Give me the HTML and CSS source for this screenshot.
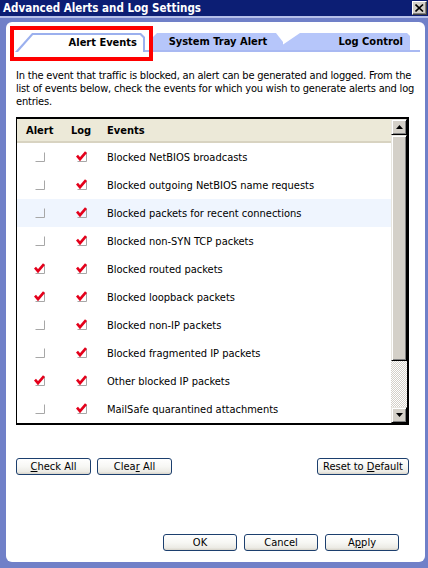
FILE: index.html
```html
<!DOCTYPE html>
<html lang="en">
<head>
<meta charset="utf-8">
<title>Advanced Alerts and Log Settings</title>
<link rel="stylesheet" href="styles.css">
</head>
<body>
<div class="window">
  <div class="titlebar">
    <span class="title">Advanced Alerts and Log Settings</span>
    <span class="close"><svg width="9" height="8" viewBox="0 0 9 8"><path d="M0.5 0.5 L8 7.5 M8 0.5 L0.5 7.5" stroke="#000" stroke-width="1.6" fill="none"/></svg></span>
  </div>
  <div class="titleline"></div>
  <div class="frame">
    <div class="panel">
      <div class="tabs">
        <div class="tab1"><div class="tab1-face"><span>Alert Events</span></div></div>
        <div class="tabrest">
          <div class="tab tab2"><span>System Tray Alert</span></div>
          <div class="tab tab3"><span>Log Control</span></div>
          <div class="tabfill"></div>
        </div>
      </div>
      <p class="desc">In the event that traffic is blocked, an alert can be generated and logged. From the list of events below, check the events for which you wish to generate alerts and log entries.</p>
      <div class="list">
        <div class="list-main">
          <div class="lrow header"><span class="h1">Alert</span><span class="h2">Log</span><span class="h3">Events</span></div>
          <div class="lrow"><span class="c1"><svg class="cb" viewBox="0 0 12 12"><path d="M10.5 1.5V10.5H1.5" stroke="#a7a7a7" fill="none"/></svg></span><span class="c2"><svg class="cb" viewBox="0 0 12 12"><path d="M10.5 1.5V10.5H1.5" stroke="#a7a7a7" fill="none"/><path d="M1 4.6 L4 8.2 L10 1.2" stroke="#e4001b" stroke-width="2.6" fill="none"/></svg></span><span class="ev">Blocked NetBIOS broadcasts</span></div>
          <div class="lrow"><span class="c1"><svg class="cb" viewBox="0 0 12 12"><path d="M10.5 1.5V10.5H1.5" stroke="#a7a7a7" fill="none"/></svg></span><span class="c2"><svg class="cb" viewBox="0 0 12 12"><path d="M10.5 1.5V10.5H1.5" stroke="#a7a7a7" fill="none"/><path d="M1 4.6 L4 8.2 L10 1.2" stroke="#e4001b" stroke-width="2.6" fill="none"/></svg></span><span class="ev">Blocked outgoing NetBIOS name requests</span></div>
          <div class="lrow hover"><span class="c1"><svg class="cb" viewBox="0 0 12 12"><path d="M10.5 1.5V10.5H1.5" stroke="#a7a7a7" fill="none"/></svg></span><span class="c2"><svg class="cb" viewBox="0 0 12 12"><path d="M10.5 1.5V10.5H1.5" stroke="#a7a7a7" fill="none"/><path d="M1 4.6 L4 8.2 L10 1.2" stroke="#e4001b" stroke-width="2.6" fill="none"/></svg></span><span class="ev">Blocked packets for recent connections</span></div>
          <div class="lrow"><span class="c1"><svg class="cb" viewBox="0 0 12 12"><path d="M10.5 1.5V10.5H1.5" stroke="#a7a7a7" fill="none"/></svg></span><span class="c2"><svg class="cb" viewBox="0 0 12 12"><path d="M10.5 1.5V10.5H1.5" stroke="#a7a7a7" fill="none"/><path d="M1 4.6 L4 8.2 L10 1.2" stroke="#e4001b" stroke-width="2.6" fill="none"/></svg></span><span class="ev">Blocked non-SYN TCP packets</span></div>
          <div class="lrow"><span class="c1"><svg class="cb" viewBox="0 0 12 12"><path d="M10.5 1.5V10.5H1.5" stroke="#a7a7a7" fill="none"/><path d="M1 4.6 L4 8.2 L10 1.2" stroke="#e4001b" stroke-width="2.6" fill="none"/></svg></span><span class="c2"><svg class="cb" viewBox="0 0 12 12"><path d="M10.5 1.5V10.5H1.5" stroke="#a7a7a7" fill="none"/><path d="M1 4.6 L4 8.2 L10 1.2" stroke="#e4001b" stroke-width="2.6" fill="none"/></svg></span><span class="ev">Blocked routed packets</span></div>
          <div class="lrow"><span class="c1"><svg class="cb" viewBox="0 0 12 12"><path d="M10.5 1.5V10.5H1.5" stroke="#a7a7a7" fill="none"/><path d="M1 4.6 L4 8.2 L10 1.2" stroke="#e4001b" stroke-width="2.6" fill="none"/></svg></span><span class="c2"><svg class="cb" viewBox="0 0 12 12"><path d="M10.5 1.5V10.5H1.5" stroke="#a7a7a7" fill="none"/><path d="M1 4.6 L4 8.2 L10 1.2" stroke="#e4001b" stroke-width="2.6" fill="none"/></svg></span><span class="ev">Blocked loopback packets</span></div>
          <div class="lrow"><span class="c1"><svg class="cb" viewBox="0 0 12 12"><path d="M10.5 1.5V10.5H1.5" stroke="#a7a7a7" fill="none"/></svg></span><span class="c2"><svg class="cb" viewBox="0 0 12 12"><path d="M10.5 1.5V10.5H1.5" stroke="#a7a7a7" fill="none"/><path d="M1 4.6 L4 8.2 L10 1.2" stroke="#e4001b" stroke-width="2.6" fill="none"/></svg></span><span class="ev">Blocked non-IP packets</span></div>
          <div class="lrow"><span class="c1"><svg class="cb" viewBox="0 0 12 12"><path d="M10.5 1.5V10.5H1.5" stroke="#a7a7a7" fill="none"/></svg></span><span class="c2"><svg class="cb" viewBox="0 0 12 12"><path d="M10.5 1.5V10.5H1.5" stroke="#a7a7a7" fill="none"/><path d="M1 4.6 L4 8.2 L10 1.2" stroke="#e4001b" stroke-width="2.6" fill="none"/></svg></span><span class="ev">Blocked fragmented IP packets</span></div>
          <div class="lrow"><span class="c1"><svg class="cb" viewBox="0 0 12 12"><path d="M10.5 1.5V10.5H1.5" stroke="#a7a7a7" fill="none"/><path d="M1 4.6 L4 8.2 L10 1.2" stroke="#e4001b" stroke-width="2.6" fill="none"/></svg></span><span class="c2"><svg class="cb" viewBox="0 0 12 12"><path d="M10.5 1.5V10.5H1.5" stroke="#a7a7a7" fill="none"/><path d="M1 4.6 L4 8.2 L10 1.2" stroke="#e4001b" stroke-width="2.6" fill="none"/></svg></span><span class="ev">Other blocked IP packets</span></div>
          <div class="lrow"><span class="c1"><svg class="cb" viewBox="0 0 12 12"><path d="M10.5 1.5V10.5H1.5" stroke="#a7a7a7" fill="none"/></svg></span><span class="c2"><svg class="cb" viewBox="0 0 12 12"><path d="M10.5 1.5V10.5H1.5" stroke="#a7a7a7" fill="none"/><path d="M1 4.6 L4 8.2 L10 1.2" stroke="#e4001b" stroke-width="2.6" fill="none"/></svg></span><span class="ev">MailSafe quarantined attachments</span></div>
        </div>
        <div class="scrollbar">
          <div class="sb-btn"><svg width="7" height="4" viewBox="0 0 7 4"><path d="M3.5 0 L7 4 L0 4Z" fill="#000"/></svg></div>
          <div class="sb-thumb"></div>
          <div class="sb-track"></div>
          <div class="sb-btn"><svg width="7" height="4" viewBox="0 0 7 4"><path d="M0 0 L7 0 L3.5 4Z" fill="#000"/></svg></div>
        </div>
      </div>
      <div class="btnrow">
        <button class="btn"><span><u>C</u>heck All</span></button>
        <button class="btn"><span>Clea<u>r</u> All</span></button>
        <button class="btn btn-wide"><span>Reset to <u>D</u>efault</span></button>
      </div>
      <div class="btnrow2">
        <button class="btn btn-s"><span>OK</span></button>
        <button class="btn btn-s"><span>Cancel</span></button>
        <button class="btn btn-s"><span>A<u>p</u>ply</span></button>
      </div>
    </div>
  </div>
  <div class="redbox"></div>
</div>
</body>
</html>
```

FILE: styles.css
```css
* { box-sizing: border-box; }
html, body { margin: 0; padding: 0; }
body {
  width: 428px;
  height: 568px;
  overflow: hidden;
  background: #7080c8;
  font-family: "DejaVu Sans Condensed", "DejaVu Sans", sans-serif;
  font-stretch: condensed;
  font-size: 11px;
  color: #000;
}
.window { position: relative; width: 428px; height: 568px; }

.titlebar {
  height: 16px;
  background: #0c1e74;
  display: flex;
  align-items: center;
  justify-content: space-between;
  padding: 0 1px 0 3px;
}
.title { color: #fff; font-weight: bold; font-size: 11.5px; line-height: 16px; }
.close {
  width: 15px;
  height: 14px;
  background: #d4d0c8;
  border: 1px solid;
  border-color: #ffffff #404040 #404040 #ffffff;
  box-shadow: inset -1px -1px 0 #808080;
  display: flex;
  align-items: center;
  justify-content: center;
}
.titleline { height: 2px; background: #b6c0ea; }
.frame { padding: 4px 3px 6px 6px; }
.panel {
  background: #fff;
  border-radius: 6px;
  height: 540px;
  padding: 11px 16px 0 10px;
  display: flex;
  flex-direction: column;
}

/* tabs */
.tabs {
  display: flex;
  align-items: flex-end;
  height: 19px;
  margin: 0 -11px 0 -1px;
  font-weight: bold;
}
.tab1 {
  width: 130px;
  height: 19px;
  background: #9bb0ee;
  padding: 2px 2px 0 0;
  clip-path: polygon(0 100%, 17px 0, calc(100% - 4px) 0, 100% 4px, 100% 100%);
}
.tab1-face {
  height: 17px;
  background: #fff;
  clip-path: polygon(3px 100%, 18px 0, calc(100% - 3px) 0, 100% 3px, 100% 100%);
  display: flex;
  align-items: center;
  justify-content: flex-end;
  padding: 0 6px 2px 0;
}
.tabrest {
  flex: 1;
  height: 19px;
  display: flex;
  align-items: flex-end;
  padding-left: 8px;
  border-bottom: 2px solid #a9b9f2;
}
.tab {
  height: 17px;
  background: #b6c6fa;
  display: flex;
  align-items: center;
}
.tab2 {
  width: 130px;
  justify-content: center;
  clip-path: polygon(0 4px, 4px 0, calc(100% - 7px) 0, 100% 9px, 100% 100%, 0 100%);
}
.tab3 {
  width: 135px;
  margin-left: -8px;
  justify-content: flex-end;
  padding-right: 7px;
  clip-path: polygon(0 100%, 25px 0, calc(100% - 3px) 0, 100% 3px, 100% 100%);
}
.tabfill { flex: 1; }

.desc {
  margin: 17px -6px 0 0;
  line-height: 13px;
  letter-spacing: -0.2px;
}

/* list */
.list {
  margin-top: 9px;
  height: 308px;
  border: 2px solid #000;
  border-left-width: 1px;
  display: flex;
}
.list-main { flex: 1; }
.lrow {
  height: 28px;
  display: grid;
  grid-template-columns: 46px 44px 1fr;
  align-items: center;
}
.lrow.hover { background: #eff5fe; }
.header {
  height: 24px;
  background: #ece9d8;
  border-bottom: 2px solid #d8d3c1;
  font-weight: bold;
}
.h1 { padding-left: 9px; }
.h2 { padding-left: 8px; }
.c1 { padding-left: 17px; display: flex; }
.c2 { padding-left: 13px; display: flex; }
.cb { width: 12px; height: 12px; display: block; }

.scrollbar { width: 16px; display: flex; flex-direction: column; }
.sb-btn, .sb-thumb {
  background: #d4d0c8;
  border: 1px solid;
  border-color: #e8e6e0 #000 #000 #e8e6e0;
  box-shadow: inset 1px 1px 0 #fff, inset -1px -1px 0 #808080;
}
.sb-btn { height: 16px; display: flex; align-items: center; justify-content: center; }
.sb-thumb { height: 226px; }
.sb-track {
  flex: 1;
  background: repeating-conic-gradient(#d4d0c8 0 25%, #ffffff 0 50%) 0 0 / 2px 2px;
}

/* buttons */
.btn {
  font-family: inherit;
  font-stretch: condensed;
  font-size: 11px;
  color: #000;
  height: 17px;
  width: 75px;
  padding: 0;
  border: 1px solid #1c3f6e;
  border-radius: 3px;
  background: linear-gradient(#ffffff 0%, #f7f7f4 50%, #ecebe5 85%, #d8d4ca 100%);
  display: flex;
  align-items: center;
  justify-content: center;
  line-height: 1;
}
.btn u { text-decoration: underline; text-underline-offset: 1px; }
.btnrow {
  margin-top: 33px;
  display: flex;
  gap: 6px;
}
.btn-wide { width: 92px; margin-left: auto; }
.btnrow2 {
  margin-top: 59px;
  display: flex;
  justify-content: flex-end;
  gap: 7px;
  padding-right: 10px;
}
.btn-s { width: 74px; }

.redbox {
  position: absolute;
  left: 10px;
  top: 26px;
  width: 143px;
  height: 35px;
  border: 4px solid #ff0000;
}
```
